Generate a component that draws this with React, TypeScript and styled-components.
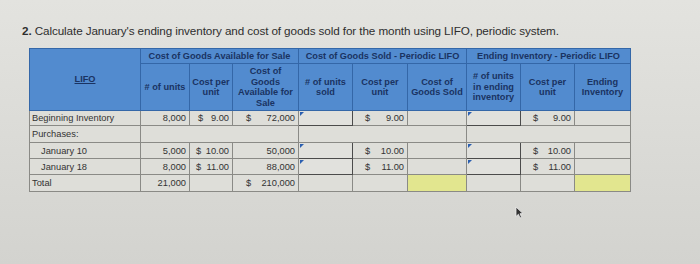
import React from 'react';
import styled, { createGlobalStyle } from 'styled-components';

const GlobalStyle = createGlobalStyle`
  html, body {
    margin: 0;
    padding: 0;
  }
  body {
    width: 700px;
    height: 264px;
    overflow: hidden;
    font-family: "Liberation Sans", Arial, sans-serif;
  }
`;

const Page = styled.div`
  position: relative;
  width: 700px;
  height: 264px;
  box-sizing: border-box;
  padding: 23px 0 0 22px;
  background: linear-gradient(180deg, #e3e3df 0%, #dcdcd8 45%, #d3d3cf 100%);
`;

const Title = styled.div`
  font-size: 11.7px;
  color: #2e2e2e;
  letter-spacing: -0.1px;
  line-height: 15px;

  b {
    font-weight: bold;
  }
`;

const Sheet = styled.table`
  margin: 10px 0 0 7px;
  border-collapse: collapse;
  table-layout: fixed;
  border: 1px solid #3b4f73;
  font-size: 9.3px;
  color: #333;
`;

const GroupTh = styled.th`
  background: #528bcf;
  color: #1a3362;
  font-weight: bold;
  font-size: 9.2px;
  height: 14px;
  padding: 0;
  border: 1px solid #3467a8;
  text-align: center;
  white-space: nowrap;
`;

const HeadTh = styled.th<{ $underline?: boolean }>`
  background: #528bcf;
  color: #1a3362;
  font-weight: bold;
  font-size: 9.2px;
  line-height: 10.5px;
  height: 46px;
  padding: 0 1px;
  border: 1px solid #3467a8;
  text-align: center;
  text-decoration: ${({ $underline }) => ($underline ? 'underline' : 'none')};
`;

const Row = styled.tr<{ $h: number }>`
  height: ${({ $h }) => $h}px;
`;

const LabelTd = styled.td<{ $indent?: boolean }>`
  background: #deded9;
  border: 1px solid #8a8a86;
  padding: 0 0 0 ${({ $indent }) => ($indent ? '11px' : '2px')};
  white-space: nowrap;
`;

const NumTd = styled.td<{ $fill?: string }>`
  background: ${({ $fill }) => $fill || '#deded9'};
  border: 1px solid #8a8a86;
  padding: 0 3px;
  text-align: right;
  white-space: nowrap;
`;

const InputTd = styled.td`
  position: relative;
  background: #e1e1dd;
  border: 1px solid #4b4b4b;
  padding: 0;

  &::before {
    content: '';
    position: absolute;
    left: 1px;
    top: 1px;
    border-top: 4px solid #2b5fb0;
    border-right: 4px solid transparent;
  }
`;

const Money = styled.div<{ $dollarPad: number }>`
  display: flex;
  justify-content: space-between;
  padding-left: ${({ $dollarPad }) => $dollarPad}px;
`;

const Cursor = styled.svg`
  position: absolute;
  left: 515px;
  top: 206px;
`;

const widths = [111, 49, 43, 66, 54, 55, 59, 54, 54, 56];

const Cash = ({ v, pad = 6 }: { v: string; pad?: number }) => (
  <Money $dollarPad={pad}>
    <span>$</span>
    <span>{v}</span>
  </Money>
);

const App = () => (
  <>
    <GlobalStyle />
    <Page>
      <Title>
        <b>2.</b> Calculate January's ending inventory and cost of goods sold for the month using LIFO, periodic system.
      </Title>
      <Sheet>
        <colgroup>
          {widths.map((w, i) => (
            <col key={i} style={{ width: w }} />
          ))}
        </colgroup>
        <thead>
          <tr>
            <HeadTh rowSpan={2} $underline>LIFO</HeadTh>
            <GroupTh colSpan={3}>Cost of Goods Available for Sale</GroupTh>
            <GroupTh colSpan={3}>Cost of Goods Sold - Periodic LIFO</GroupTh>
            <GroupTh colSpan={3}>Ending Inventory - Periodic LIFO</GroupTh>
          </tr>
          <tr>
            <HeadTh># of units</HeadTh>
            <HeadTh>Cost per unit</HeadTh>
            <HeadTh>Cost of Goods Available for Sale</HeadTh>
            <HeadTh># of units sold</HeadTh>
            <HeadTh>Cost per unit</HeadTh>
            <HeadTh>Cost of Goods Sold</HeadTh>
            <HeadTh># of units in ending inventory</HeadTh>
            <HeadTh>Cost per unit</HeadTh>
            <HeadTh>Ending Inventory</HeadTh>
          </tr>
        </thead>
        <tbody>
          <Row $h={15}>
            <LabelTd>Beginning Inventory</LabelTd>
            <NumTd>8,000</NumTd>
            <NumTd><Cash v="9.00" pad={5} /></NumTd>
            <NumTd><Cash v="72,000" pad={10} /></NumTd>
            <InputTd />
            <NumTd><Cash v="9.00" pad={9} /></NumTd>
            <NumTd />
            <InputTd />
            <NumTd><Cash v="9.00" pad={9} /></NumTd>
            <NumTd />
          </Row>
          <Row $h={17}>
            <LabelTd>Purchases:</LabelTd>
            <NumTd colSpan={3} />
            <NumTd colSpan={3} />
            <NumTd colSpan={3} />
          </Row>
          <Row $h={16}>
            <LabelTd $indent>January 10</LabelTd>
            <NumTd>5,000</NumTd>
            <NumTd><Cash v="10.00" pad={3} /></NumTd>
            <NumTd>50,000</NumTd>
            <InputTd />
            <NumTd><Cash v="10.00" pad={9} /></NumTd>
            <NumTd />
            <InputTd />
            <NumTd><Cash v="10.00" pad={9} /></NumTd>
            <NumTd />
          </Row>
          <Row $h={16}>
            <LabelTd $indent>January 18</LabelTd>
            <NumTd>8,000</NumTd>
            <NumTd><Cash v="11.00" pad={3} /></NumTd>
            <NumTd>88,000</NumTd>
            <InputTd />
            <NumTd><Cash v="11.00" pad={9} /></NumTd>
            <NumTd />
            <InputTd />
            <NumTd><Cash v="11.00" pad={9} /></NumTd>
            <NumTd />
          </Row>
          <Row $h={17}>
            <LabelTd>Total</LabelTd>
            <NumTd>21,000</NumTd>
            <NumTd />
            <NumTd><Cash v="210,000" pad={10} /></NumTd>
            <NumTd />
            <NumTd />
            <NumTd $fill="#e2e68f" />
            <NumTd />
            <NumTd />
            <NumTd $fill="#e2e68f" />
          </Row>
        </tbody>
      </Sheet>
      <Cursor width="9" height="13" viewBox="0 0 9 13">
        <path d="M1 1 L1 10.5 L3.4 8.3 L5 12 L6.6 11.3 L5 7.7 L8 7.6 Z" fill="#333" stroke="#eee" strokeWidth="0.8" />
      </Cursor>
    </Page>
  </>
);

export default App;
